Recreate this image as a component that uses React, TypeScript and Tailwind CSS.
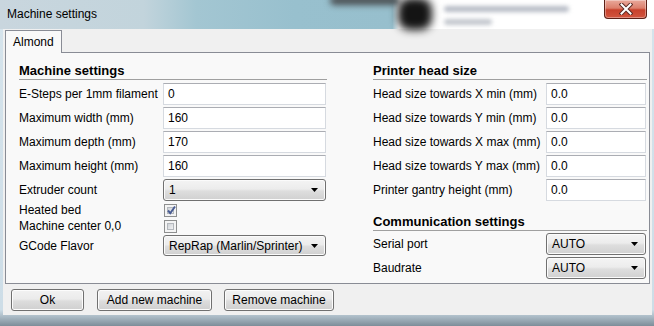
import React from "react";

type FieldProps = { value: string; className?: string };

const TextField = ({ value, className = "" }: FieldProps) => (
  <div
    className={`h-[22px] flex items-center border border-[#d6dae0] border-t-[#abadb3] bg-white pl-[4px] ${className}`}
  >
    {value}
  </div>
);

const Combo = ({ value, className = "" }: FieldProps) => (
  <div
    className={`flex items-center rounded-[3px] border border-[#707070] bg-[linear-gradient(to_bottom,#f4f4f4_0%,#ececec_45%,#dedede_55%,#d0d0d0_100%)] shadow-[inset_0_0_0_1px_#fbfbfb] pl-[5px] pr-[7px] ${className}`}
  >
    <span className="flex-1">{value}</span>
    <svg width="7" height="4" viewBox="0 0 7 4">
      <path d="M0 0h7L3.5 4z" fill="#000" />
    </svg>
  </div>
);

const Check = ({ checked }: { checked?: boolean }) => (
  <div className="ml-[1px] w-[13px] h-[13px] border border-[#8e8f8f] bg-[#f4f4f4] p-[2px]">
    <div className="relative w-full h-full border border-[#b4b8bd] bg-[linear-gradient(135deg,#cfd3d8_0%,#f3f3f3_100%)]">
      {checked && (
        <svg
          className="absolute -left-[2px] -top-[3px]"
          width="11"
          height="11"
          viewBox="0 0 11 11"
        >
          <path
            d="M2 5.5 L4.3 8.2 L9 1.5"
            fill="none"
            stroke="#4a5d93"
            strokeWidth="2"
          />
        </svg>
      )}
    </div>
  </div>
);

const Header = ({ children }: { children: React.ReactNode }) => (
  <div className="h-[17px] leading-[16px] text-[13px] font-bold border-b border-[#a0a0a0]">
    {children}
  </div>
);

const Button = ({ label, className = "" }: { label: string; className?: string }) => (
  <div
    className={`h-[22px] flex items-center justify-center rounded-[3px] border border-[#707070] bg-[linear-gradient(to_bottom,#f2f2f2_0%,#ebebeb_45%,#dddddd_55%,#cfcfcf_100%)] shadow-[inset_0_0_0_1px_#fcfcfc] ${className}`}
  >
    {label}
  </div>
);

const LeftRow = ({ label, children, h = "h-[22px]" }: { label: string; children: React.ReactNode; h?: string }) => (
  <div className={`flex items-center ${h}`}>
    <span className="w-[144px] shrink-0">{label}</span>
    {children}
  </div>
);

const RightRow = ({ label, children }: { label: string; children: React.ReactNode }) => (
  <div className="flex items-center h-[22px]">
    <span className="w-[173px] shrink-0">{label}</span>
    {children}
  </div>
);

const App = () => {
  const headRows = [
    "Head size towards X min (mm)",
    "Head size towards Y min (mm)",
    "Head size towards X max (mm)",
    "Head size towards Y max (mm)",
    "Printer gantry height (mm)",
  ];

  return (
    <div className="w-[654px] h-[326px] overflow-hidden flex flex-col bg-[linear-gradient(to_bottom,#d6e4ec_0%,#cddde7_95%,#7d8d99_100%)] text-black text-[12px] font-['Liberation_Sans',Arial,sans-serif]">
      {/* title bar, glass over a blurred desktop */}
      <div className="relative h-[29px] shrink-0 bg-[linear-gradient(to_right,#c9d6de_0%,#c2d4dc_22%,#a3c6d2_30%,#98c0ce_45%,#97bfcd_60%,#ffffff_61%,#ffffff_100%)]">
        <div className="absolute left-[330px] top-[-4px] w-[70px] h-[9px] rounded-full bg-[#4a4f52] blur-[3px]" />
        <div className="absolute left-[398px] top-[-2px] w-[34px] h-[32px] rounded-[12px] bg-[#141414] blur-[4px]" />
        <div className="absolute left-[444px] top-[6px] w-[125px] h-[6px] rounded-full bg-[#b7bcc6] blur-[2px]" />
        <div className="absolute left-[444px] top-[19px] w-[48px] h-[6px] rounded-full bg-[#c2c6cd] blur-[2px]" />
        <div className="absolute left-[7px] top-[6px] text-[12px] leading-[16px] text-black">
          Machine settings
        </div>
        <div className="absolute left-[604px] top-0 w-[43px] h-[19px] rounded-b-[4px] border border-t-0 border-[#5c2017] bg-[linear-gradient(to_bottom,#e9a99b_0%,#dc7f6c_45%,#c8412c_55%,#d2553f_100%)] shadow-[inset_0_0_0_1px_rgba(255,255,255,0.35)] flex items-center justify-center">
          <svg width="14" height="12" viewBox="0 0 14 12">
            <path d="M2.5 1.5 L11.5 10.5 M11.5 1.5 L2.5 10.5" stroke="#5a2a24" strokeWidth="4" strokeLinecap="square" />
            <path d="M2.5 1.5 L11.5 10.5 M11.5 1.5 L2.5 10.5" stroke="#ffffff" strokeWidth="2" strokeLinecap="square" />
          </svg>
        </div>
      </div>

      {/* client area */}
      <div className="ml-[3px] w-[649px] h-[286px] shrink-0 bg-[#f0f0f0] flex flex-col">
        <div className="ml-[2px] mt-[1px] flex">
          <div className="relative z-10 h-[23px] -mb-px px-[7px] pt-[3px] border border-b-0 border-[#898c95] bg-[#f9f9f9] leading-[16px]">
            Almond
          </div>
        </div>
        <div className="ml-[2px] w-[645px] h-[232px] border border-[#898c95] bg-[#f9f9f9] pl-[13px] pt-[10px]">
          <div className="grid grid-cols-[308px_274px] gap-x-[46px]">
            <div className="flex flex-col">
              <Header>Machine settings</Header>
              <div className="mt-[3px] flex flex-col gap-[2px]">
                <LeftRow label="E-Steps per 1mm filament">
                  <TextField value="0" className="w-[163px]" />
                </LeftRow>
                <LeftRow label="Maximum width (mm)">
                  <TextField value="160" className="w-[163px]" />
                </LeftRow>
                <LeftRow label="Maximum depth (mm)">
                  <TextField value="170" className="w-[163px]" />
                </LeftRow>
                <LeftRow label="Maximum height (mm)">
                  <TextField value="160" className="w-[163px]" />
                </LeftRow>
                <LeftRow label="Extruder count">
                  <Combo value="1" className="w-[163px] h-[22px]" />
                </LeftRow>
                <LeftRow label="Heated bed" h="h-[14px]">
                  <Check checked />
                </LeftRow>
                <LeftRow label="Machine center 0,0" h="h-[14px]">
                  <Check />
                </LeftRow>
                <LeftRow label="GCode Flavor" h="h-[21px]">
                  <Combo value="RepRap (Marlin/Sprinter)" className="w-[163px] h-[21px]" />
                </LeftRow>
              </div>
            </div>

            <div className="flex flex-col">
              <Header>Printer head size</Header>
              <div className="mt-[3px] flex flex-col gap-[2px]">
                {headRows.map((label) => (
                  <RightRow key={label} label={label}>
                    <TextField value="0.0" className="w-[100px]" />
                  </RightRow>
                ))}
              </div>
              <div className="mt-[13px]">
                <Header>Communication settings</Header>
              </div>
              <div className="mt-[2px] flex flex-col gap-[2px]">
                <RightRow label="Serial port">
                  <Combo value="AUTO" className="w-[100px] h-[22px]" />
                </RightRow>
                <RightRow label="Baudrate">
                  <Combo value="AUTO" className="w-[100px] h-[22px]" />
                </RightRow>
              </div>
            </div>
          </div>
        </div>

        <div className="mt-[5px] pl-[8px] flex gap-[12px]">
          <Button label="Ok" className="w-[73px]" />
          <Button label="Add new machine" className="ml-[1px] w-[115px]" />
          <Button label="Remove machine" className="w-[110px]" />
        </div>
      </div>
    </div>
  );
};

export default App;
